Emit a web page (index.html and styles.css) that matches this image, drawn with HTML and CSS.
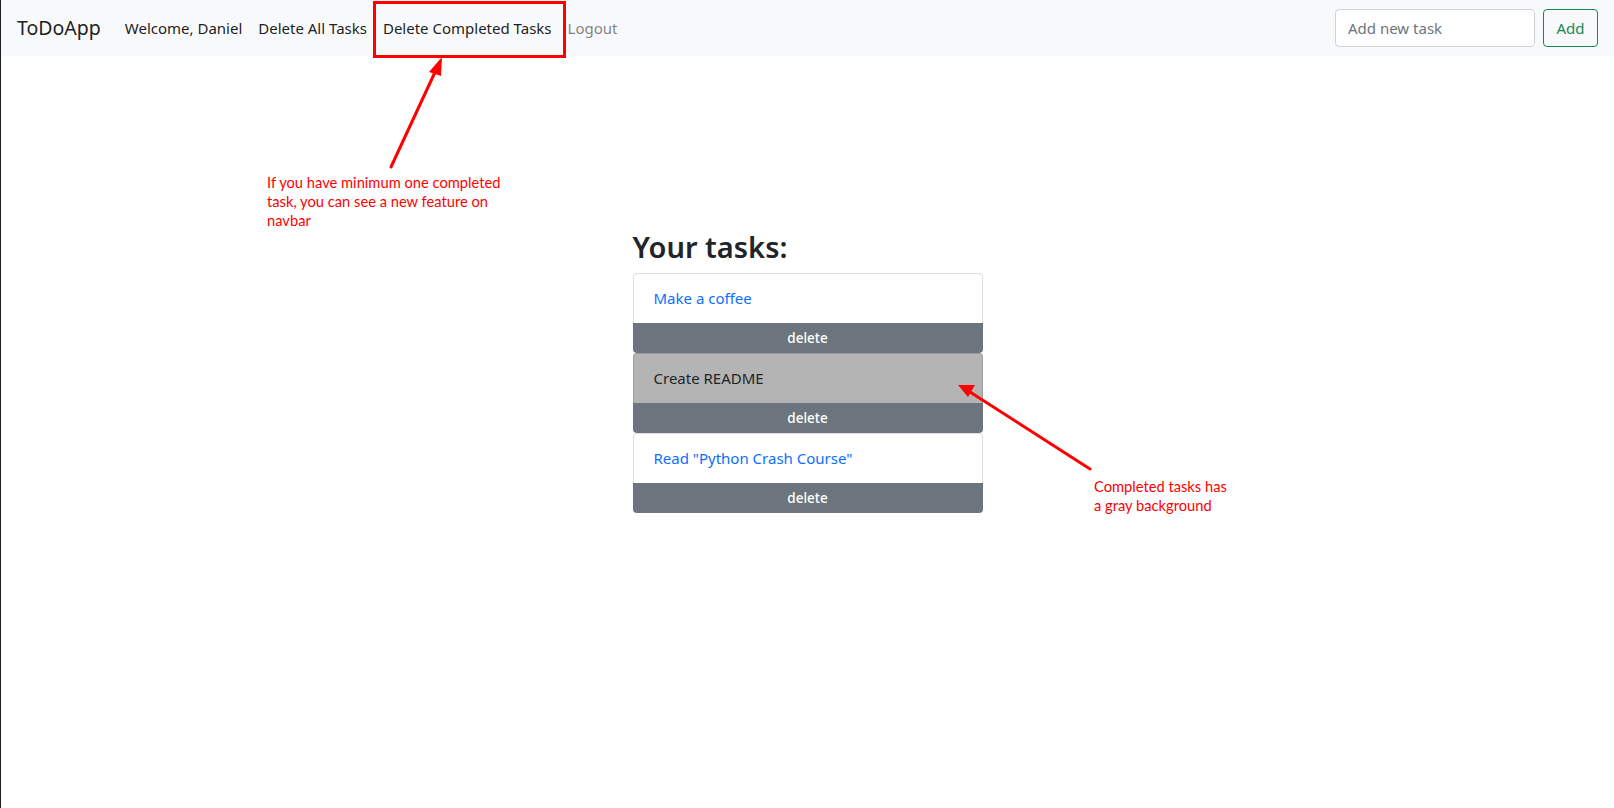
FILE: index.html
```html
<!DOCTYPE html>
<html lang="en">
<head>
<meta charset="utf-8">
<title>ToDoApp</title>
<link rel="stylesheet" href="styles.css">
</head>
<body>
<nav class="navbar">
  <a class="brand" href="#">ToDoApp</a>
  <ul class="nav">
    <li><span class="nav-link">Welcome, Daniel</span></li>
    <li><a class="nav-link" href="#">Delete All Tasks</a></li>
    <li><a class="nav-link" href="#">Delete Completed Tasks</a></li>
    <li><a class="nav-link nav-muted" href="#">Logout</a></li>
  </ul>
  <form class="add-form">
    <input class="add-input" type="text" placeholder="Add new task">
    <button class="add-btn" type="button">Add</button>
  </form>
</nav>

<main class="container">
  <h2 class="title">Your tasks:</h2>
  <div class="task-list">
    <div class="task">
      <div class="task-body"><a class="task-link" href="#">Make a coffee</a></div>
      <button class="task-delete" type="button">delete</button>
    </div>
    <div class="task">
      <div class="task-body task-done"><span class="task-text">Create README</span></div>
      <button class="task-delete" type="button">delete</button>
    </div>
    <div class="task">
      <div class="task-body"><a class="task-link" href="#">Read "Python Crash Course"</a></div>
      <button class="task-delete" type="button">delete</button>
    </div>
  </div>
</main>

<div class="annotations">
  <div class="highlight-box"></div>
  <svg class="arrows" width="1614" height="808" viewBox="0 0 1614 808">
    <line x1="391" y1="167" x2="436" y2="70" stroke="#ff0000" stroke-width="3" stroke-linecap="round"/>
    <polygon points="442,57 429,72 441,76" fill="#ff0000"/>
    <line x1="1090" y1="469" x2="970" y2="392" stroke="#ff0000" stroke-width="3" stroke-linecap="round"/>
    <polygon points="958,385 975,385 968,397" fill="#ff0000"/>
  </svg>
  <p class="note note-nav">If you have minimum one completed<br>task, you can see a new feature on<br>navbar</p>
  <p class="note note-gray">Completed tasks has<br>a gray background</p>
</div>
</body>
</html>
```

FILE: styles.css
```css
* {
  box-sizing: border-box;
}

html, body {
  margin: 0;
  padding: 0;
}

body {
  position: relative;
  min-height: 100vh;
  border-left: 1px solid #1f1f1f;
  background: #ffffff;
  color: #212529;
  font-family: "Noto Sans", "Open Sans", sans-serif;
  font-size: 15px;
  line-height: 1.5;
}

a {
  text-decoration: none;
}

/* navbar */
.navbar {
  display: flex;
  align-items: center;
  height: 56px;
  padding: 0 16px;
  background: #f8f9fa;
}

.brand {
  font-size: 19.5px;
  color: rgba(0, 0, 0, 0.9);
  margin-right: 16px;
}

.nav {
  display: flex;
  list-style: none;
  margin: 0;
  padding: 0;
}

.nav-link {
  display: block;
  padding: 8px;
  color: rgba(0, 0, 0, 0.9);
}

.nav-muted {
  color: rgba(0, 0, 0, 0.5);
}

.add-form {
  display: flex;
  gap: 8px;
  margin-left: auto;
}

.add-input {
  width: 200px;
  height: 38px;
  padding: 6px 12px;
  border: 1px solid #ced4da;
  border-radius: 4px;
  font-family: inherit;
  font-size: 15px;
  color: #212529;
  background: #fff;
}

.add-input::placeholder {
  color: #6c757d;
}

.add-btn {
  height: 38px;
  width: 55px;
  padding: 0;
  border: 1px solid #198754;
  border-radius: 4px;
  background: transparent;
  color: #198754;
  font-family: inherit;
  font-size: 15px;
}

/* tasks */
.container {
  width: 350px;
  margin: 0 auto;
  padding-top: 174px;
}

.title {
  margin: 0 0 8px;
  font-size: 29px;
  font-weight: 600;
  line-height: 1.2;
  color: #212529;
}

.task-list {
  display: flex;
  flex-direction: column;
}

.task {
  display: flex;
  flex-direction: column;
}

.task-body {
  display: flex;
  align-items: center;
  height: 50px;
  padding: 0 20px;
  background: #fff;
  border: 1px solid rgba(0, 0, 0, 0.125);
  border-bottom: 0;
  border-radius: 4px 4px 0 0;
}

.task-done {
  background: #b4b4b4;
}

.task-link {
  color: #0d6efd;
}

.task-text {
  color: #212529;
}

.task-delete {
  height: 30px;
  border: 0;
  border-radius: 0 0 4px 4px;
  background: #6c757d;
  color: #fff;
  font-family: inherit;
  font-size: 13.5px;
  font-weight: 500;
}

/* annotations */
.annotations {
  position: absolute;
  inset: 0;
  pointer-events: none;
}

.highlight-box {
  position: absolute;
  left: 372px;
  top: 1px;
  width: 193px;
  height: 57px;
  border: 3px solid #ff0000;
}

.arrows {
  position: absolute;
  left: -1px;
  top: 0;
}

.note {
  position: absolute;
  margin: 0;
  color: #ff0000;
  font-family: Lato, "Noto Sans", sans-serif;
  font-size: 14.7px;
  line-height: 19px;
}

.note-nav {
  left: 266px;
  top: 173px;
}

.note-gray {
  left: 1093px;
  top: 477px;
}
```
